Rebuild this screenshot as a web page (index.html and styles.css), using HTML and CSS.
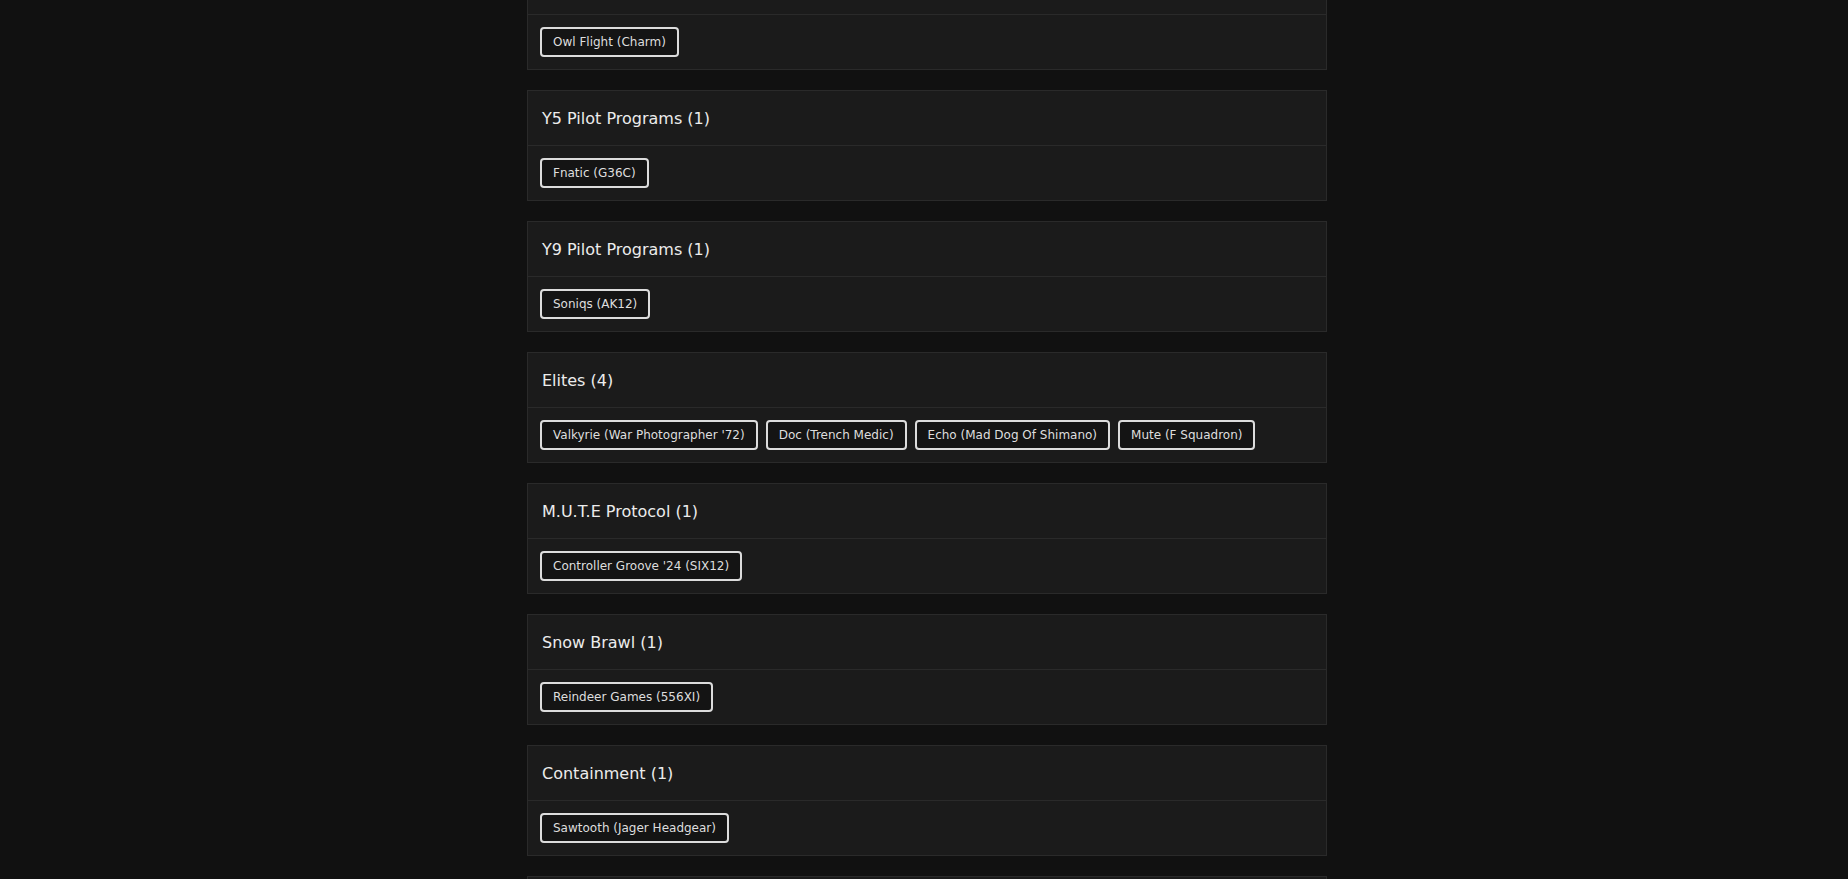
FILE: index.html
```html
<!DOCTYPE html>
<html lang="en">
<head>
    <meta charset="UTF-8">
    <title>Collections</title>
    <link rel="stylesheet" href="styles.css">
</head>
<body>

<div class="collections">
    <div class="collection">
        <div class="collection-title"></div>
        <div class="collection-items">
            <span class="item">Owl Flight (Charm)</span>
        </div>
    </div>
    <div class="collection">
        <div class="collection-title">Y5 Pilot Programs (1)</div>
        <div class="collection-items">
            <span class="item">Fnatic (G36C)</span>
        </div>
    </div>
    <div class="collection">
        <div class="collection-title">Y9 Pilot Programs (1)</div>
        <div class="collection-items">
            <span class="item">Soniqs (AK12)</span>
        </div>
    </div>
    <div class="collection">
        <div class="collection-title">Elites (4)</div>
        <div class="collection-items">
            <span class="item">Valkyrie (War Photographer '72)</span>
            <span class="item">Doc (Trench Medic)</span>
            <span class="item">Echo (Mad Dog Of Shimano)</span>
            <span class="item">Mute (F Squadron)</span>
        </div>
    </div>
    <div class="collection">
        <div class="collection-title">M.U.T.E Protocol (1)</div>
        <div class="collection-items">
            <span class="item">Controller Groove '24 (SIX12)</span>
        </div>
    </div>
    <div class="collection">
        <div class="collection-title">Snow Brawl (1)</div>
        <div class="collection-items">
            <span class="item">Reindeer Games (556XI)</span>
        </div>
    </div>
    <div class="collection">
        <div class="collection-title">Containment (1)</div>
        <div class="collection-items">
            <span class="item">Sawtooth (Jager Headgear)</span>
        </div>
    </div>
    <div class="collection">
        <div class="collection-title"></div>
    </div>
</div>

</body>
</html>
```

FILE: styles.css
```css
body {
    margin: 0;
    background-color: #111111;
    color: #e6e6e6;
    font-family: 'DejaVu Sans', sans-serif;
    overflow: hidden;
}
.collections {
    width: 800px;
    margin: -41px 0 0 527px;
}
.collection {
    background: #1b1b1b;
    border: 1px solid #2a2a2a;
    margin-bottom: 20px;
}
.collection-title {
    height: 55px;
    box-sizing: border-box;
    padding: 0 14px;
    display: flex;
    align-items: center;
    font-size: 16px;
    color: #ececec;
    border-bottom: 1px solid #2a2a2a;
}
.collection-items {
    display: flex;
    flex-wrap: wrap;
    gap: 8px;
    padding: 12px;
}
.item {
    display: inline-block;
    height: 30px;
    box-sizing: border-box;
    line-height: 26px;
    padding: 0 11px;
    border: 2px solid #dcdcdc;
    border-radius: 4px;
    background: #141414;
    color: #dedede;
    font-size: 12px;
}
```
